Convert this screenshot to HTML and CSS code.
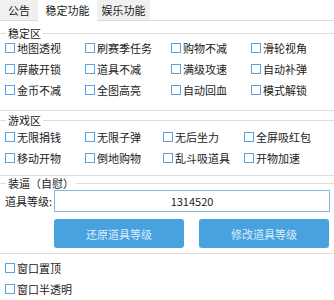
FILE: index.html
```html
<!DOCTYPE html>
<html lang="zh-CN">
<head>
    <meta charset="UTF-8">
    <title>辅助面板</title>
    <link rel="stylesheet" href="styles.css">
</head>
<body>
    <div class="tabs">
        <div class="tab tab-notice">公告</div>
        <div class="tab tab-stable active">稳定功能</div>
        <div class="tab tab-fun">娱乐功能</div>
    </div>

    <fieldset class="group group-stable">
        <legend>稳定区</legend>
        <div class="grid">
            <label class="chk"><input type="checkbox">地图透视</label>
            <label class="chk"><input type="checkbox">刷赛季任务</label>
            <label class="chk"><input type="checkbox">购物不减</label>
            <label class="chk"><input type="checkbox">滑轮视角</label>
            <label class="chk"><input type="checkbox">屏蔽开锁</label>
            <label class="chk"><input type="checkbox">道具不减</label>
            <label class="chk"><input type="checkbox">满级攻速</label>
            <label class="chk"><input type="checkbox">自动补弹</label>
            <label class="chk"><input type="checkbox">金币不减</label>
            <label class="chk"><input type="checkbox">全图高亮</label>
            <label class="chk"><input type="checkbox">自动回血</label>
            <label class="chk"><input type="checkbox">模式解锁</label>
        </div>
    </fieldset>

    <fieldset class="group group-game">
        <legend>游戏区</legend>
        <div class="grid">
            <label class="chk"><input type="checkbox">无限捐钱</label>
            <label class="chk"><input type="checkbox">无限子弹</label>
            <label class="chk"><input type="checkbox">无后坐力</label>
            <label class="chk"><input type="checkbox">全屏吸红包</label>
            <label class="chk"><input type="checkbox">移动开物</label>
            <label class="chk"><input type="checkbox">倒地购物</label>
            <label class="chk"><input type="checkbox">乱斗吸道具</label>
            <label class="chk"><input type="checkbox">开物加速</label>
        </div>
    </fieldset>

    <fieldset class="group group-item">
        <legend>装逼（自慰）</legend>
        <div class="field">
            <span class="field-label">道具等级:</span>
            <input type="text" class="level" value="1314520">
        </div>
        <div class="actions">
            <button type="button">还原道具等级</button>
            <button type="button">修改道具等级</button>
        </div>
    </fieldset>

    <div class="window-opts">
        <label class="chk"><input type="checkbox">窗口置顶</label>
        <label class="chk"><input type="checkbox">窗口半透明</label>
    </div>
</body>
</html>
```

FILE: styles.css
```css
* {
    box-sizing: border-box;
}

body {
    margin: 0;
    background: #ffffff;
    color: #1b1b1b;
    font-family: "Noto Sans CJK SC", "Microsoft YaHei", sans-serif;
    font-size: 11px;
    width: 334px;
    height: 300px;
    overflow: hidden;
}

.tabs {
    display: flex;
    height: 21px;
    border-bottom: 1px solid #dadada;
}

.tab {
    height: 20px;
    line-height: 20px;
    text-align: center;
    background: #f0f0f0;
}

.tab-notice {
    width: 38px;
}

.tab-stable {
    width: 59px;
}

.tab-fun {
    width: 53px;
}

.tab.active {
    background: #ffffff;
    height: 21px;
}

/* group boxes run edge to edge, only the top/bottom lines show */
.group {
    margin: 0;
    padding: 0 4px 10px 5px;
    border: 1px solid #dcdcdc;
    border-left: 0;
    border-right: 0;
    min-width: 0;
}

.group legend {
    margin-left: 1px;
    padding: 0 2px;
    line-height: 12px;
}

.group-stable {
    margin-top: 6px;
}

.group-stable .grid {
    margin-top: -2px;
    grid-template-columns: 80px 86px 80px 1fr;
}

.group-game {
    margin-top: 3px;
    padding-bottom: 7px;
}

.group-game .grid {
    grid-template-columns: 80px 78px 81px 1fr;
}

.grid {
    display: grid;
    grid-auto-rows: 21px;
}

.chk {
    display: flex;
    align-items: center;
    height: 21px;
    white-space: nowrap;
}

.chk input {
    appearance: none;
    width: 10px;
    height: 10px;
    margin: 0 2px 0 0;
    border: 1px solid #5aa2e4;
    background: #ffffff;
}

.group-item {
    margin-top: 1px;
    padding-bottom: 5px;
}

.field {
    display: flex;
    align-items: center;
    margin-top: 1px;
}

.field-label {
    width: 49px;
}

.level {
    flex: 1;
    height: 22px;
    border: 1px solid #86b8e6;
    text-align: center;
    font-family: inherit;
    font-size: 11px;
    color: #1b1b1b;
    outline: none;
}

.actions {
    display: flex;
    gap: 15px;
    margin: 7px 0 0 49px;
}

.actions button {
    width: 130px;
    height: 29px;
    border: none;
    border-radius: 3px;
    background: #48a2df;
    color: #dcedfa;
    font-family: inherit;
    font-size: 11px;
}

.window-opts {
    margin-top: 3px;
    padding-left: 5px;
}
```
